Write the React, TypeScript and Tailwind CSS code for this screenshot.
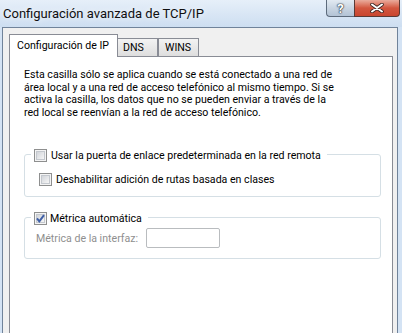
import React from "react";

const CheckBox: React.FC<{ checked?: boolean }> = ({ checked }) => {
  return (
    <span className="relative flex h-[13px] w-[13px] shrink-0 items-center justify-center border border-[#8e8f8f] bg-[#f4f4f4]">
      <span className="h-[9px] w-[9px] border border-[#c4c8ce] bg-gradient-to-br from-[#d2d5da] to-[#f6f6f6]" />
      {checked && (
        <svg viewBox="0 0 11 11" className="absolute inset-0 h-[11px] w-[11px]">
          <path
            d="M2 5.4 L4.3 8.3 L9 2.2"
            fill="none"
            stroke="#3f5fa6"
            strokeWidth="2"
            strokeLinejoin="miter"
          />
        </svg>
      )}
    </span>
  );
};

const TitleButtons: React.FC = () => (
  <div className="ml-auto mr-[2px] flex h-[17px]">
    <div className="flex h-full w-[28px] items-center justify-center rounded-bl-[4px] border border-t-0 border-r-0 border-[#5d6b7c] bg-gradient-to-b from-[#e2eaf2] via-[#c9d5e2] to-[#b3c3d5]">
      <span className="text-[13px] font-bold leading-[13px] text-white [text-shadow:0_0_1px_#2c3540,0_0_1px_#2c3540,0_0_2px_#2c3540]">
        ?
      </span>
    </div>
    <div className="flex h-full w-[46px] items-center justify-center rounded-br-[4px] border border-t-0 border-[#5a3a35] bg-gradient-to-b from-[#e9ab9c] via-[#d2563f] to-[#c9462f]">
      <svg viewBox="0 0 14 10" className="h-[10px] w-[14px]">
        <path d="M2 1.5 L12 8.5 M12 1.5 L2 8.5" stroke="#3a2522" strokeWidth="3.6" strokeLinecap="round" />
        <path d="M2 1.5 L12 8.5 M12 1.5 L2 8.5" stroke="#ffffff" strokeWidth="2" strokeLinecap="round" />
      </svg>
    </div>
  </div>
);

export default function App() {
  return (
    <div className="flex h-[333px] w-[402px] flex-col overflow-hidden bg-[#d4e3f4] text-black [font-family:Roboto,sans-serif]">
      {/* caption */}
      <div className="flex h-[27px] shrink-0 items-start bg-gradient-to-b from-[#e6eff9] to-[#cddef1]">
        <span className="ml-[3px] mt-[5px] whitespace-nowrap text-[13px] leading-[17px] text-[#101010] [text-shadow:0_0_6px_#ffffff]">
          Configuración avanzada de TCP/IP
        </span>
        <TitleButtons />
      </div>

      <div className="flex min-h-0 flex-1 pl-[2px] pr-[4px]">
        <div className="flex flex-1 flex-col overflow-hidden border-l border-r border-t border-[#70839a] bg-[#f0f0f0] pl-[6px] pr-[4px] pt-[6px]">
          {/* tabs */}
          <div className="flex h-[22px] shrink-0 items-end text-[10.6px] leading-[13px]">
            <div className="relative z-10 -mb-px h-[23px] w-[109px] whitespace-nowrap border border-b-0 border-[#898c95] bg-white pl-[7px] pt-[4px]">
              Configuración de IP
            </div>
            <div className="h-[18px] w-[40px] border-r border-t border-[#898c95] bg-gradient-to-b from-[#f3f3f3] to-[#dedede] pl-[5px] pt-[2px]">
              DNS
            </div>
            <div className="h-[18px] w-[41px] border-l border-r border-t border-[#898c95] bg-gradient-to-b from-[#f3f3f3] to-[#dedede] pl-[6px] pt-[2px]">
              WINS
            </div>
          </div>

          {/* tab page */}
          <div className="h-[320px] shrink-0 border border-[#898c95] bg-white pl-[14px] pr-[11px] pt-[12px] text-[10.6px] leading-[13px]">
            <p className="whitespace-nowrap leading-[12.5px]">
              Esta casilla sólo se aplica cuando se está conectado a una red de
              <br />
              área local y a una red de acceso telefónico al mismo tiempo. Si se
              <br />
              activa la casilla, los datos que no se pueden enviar a través de la
              <br />
              red local se reenvían a la red de acceso telefónico.
            </p>

            <div className="mt-[35px] rounded-[3px] border border-[#d5dfe5] pb-[9px]">
              <div className="-mt-[7px] ml-[6px] flex h-[15px] w-fit items-center gap-[4px] bg-white pl-[3px] pr-[6px]">
                <CheckBox />
                <span className="whitespace-nowrap">Usar la puerta de enlace predeterminada en la red remota</span>
              </div>
              <div className="ml-[14px] mt-[9px] flex h-[15px] items-center gap-[4px]">
                <CheckBox />
                <span className="whitespace-nowrap">Deshabilitar adición de rutas basada en clases</span>
              </div>
            </div>

            <div className="mt-[20px] rounded-[3px] border border-[#d5dfe5] pb-[10px]">
              <div className="-mt-[7px] ml-[6px] flex h-[15px] w-fit items-center gap-[3px] bg-white pl-[3px] pr-[6px]">
                <CheckBox checked />
                <span className="whitespace-nowrap">Métrica automática</span>
              </div>
              <div className="ml-[11px] mt-[2px] flex h-[20px] items-center">
                <span className="w-[110px] whitespace-nowrap text-[#8f8f8f]">Métrica de la interfaz:</span>
                <div className="h-[20px] w-[74px] rounded-[2px] border border-[#b9bcbf] bg-white" />
              </div>
            </div>
          </div>
        </div>
      </div>
    </div>
  );
}
